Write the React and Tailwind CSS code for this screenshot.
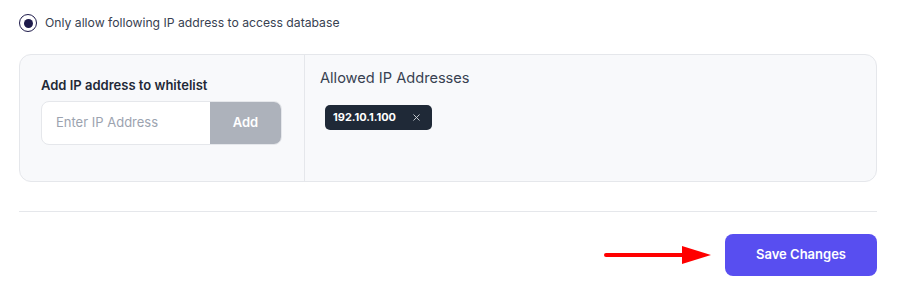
import { X } from 'lucide-react';

export default function App() {
  const ips = ['192.10.1.100'];

  return (
    <div className="w-[897px] h-[298px] bg-white pl-[19px] pr-[20px] pt-[14px]" style={{ fontFamily: 'Inter, "Liberation Sans", sans-serif' }}>
      {/* radio */}
      <label className="flex items-center h-[18px] gap-[8px]">
        <span className="w-[18px] h-[18px] rounded-full border-[1.5px] border-[#1e1b4b] flex items-center justify-center">
          <span className="w-[9px] h-[9px] rounded-full bg-[#1e1b4b]" />
        </span>
        <span className="text-[12.2px] text-[#374151]">Only allow following IP address to access database</span>
      </label>

      {/* whitelist card */}
      <div className="mt-[22px] h-[128px] flex rounded-[12px] border border-[#e5e7eb] bg-[#f8f9fb]">
        <div className="w-[284px] shrink-0 pl-[21px] pt-[21px]">
          <div className="text-[13px] font-semibold text-[#1f2937] leading-[18px]">Add IP address to whitelist</div>
          <div className="mt-[7px] flex w-[241px] h-[44px] rounded-[8px] border border-[#e5e7eb] bg-white overflow-hidden">
            <input
              className="flex-1 min-w-0 pl-[14px] text-[13px] text-[#374151] placeholder:text-[#9ca3af] outline-none bg-transparent"
              placeholder="Enter IP Address"
            />
            <button className="w-[71px] bg-[#adb2bb] text-white text-[13px] font-semibold">Add</button>
          </div>
        </div>
        <div className="flex-1 border-l border-[#e5e7eb] pl-[15px] pt-[13px]">
          <div className="text-[14.6px] text-[#374151] leading-[20px]">Allowed IP Addresses</div>
          <div className="mt-[17px] ml-[5px] flex flex-wrap gap-2">
            {ips.map(ip => (
              <span key={ip} className="h-[25px] flex items-center gap-[15px] rounded-[5px] bg-[#1f2937] pl-[8px] pr-[10px] text-white text-[11px] font-bold">
                {ip}
                <X className="w-[11px] h-[11px] text-[#d1d5db]" strokeWidth={2} />
              </span>
            ))}
          </div>
        </div>
      </div>

      <div className="mt-[29px] border-t border-[#e5e7eb]" />

      <div className="mt-[22px] flex items-center justify-end gap-[13px]">
        <svg width="109" height="20" viewBox="0 0 109 20">
          <line x1="3" y1="10" x2="82" y2="10" stroke="#ff0000" strokeWidth="4" strokeLinecap="round" />
          <polygon points="79,1 108,10 79,19" fill="#ff0000" />
        </svg>
        <button className="w-[152px] h-[42px] rounded-[8px] bg-[#584ef0] text-white text-[13px] font-semibold">Save Changes</button>
      </div>
    </div>
  );
}
